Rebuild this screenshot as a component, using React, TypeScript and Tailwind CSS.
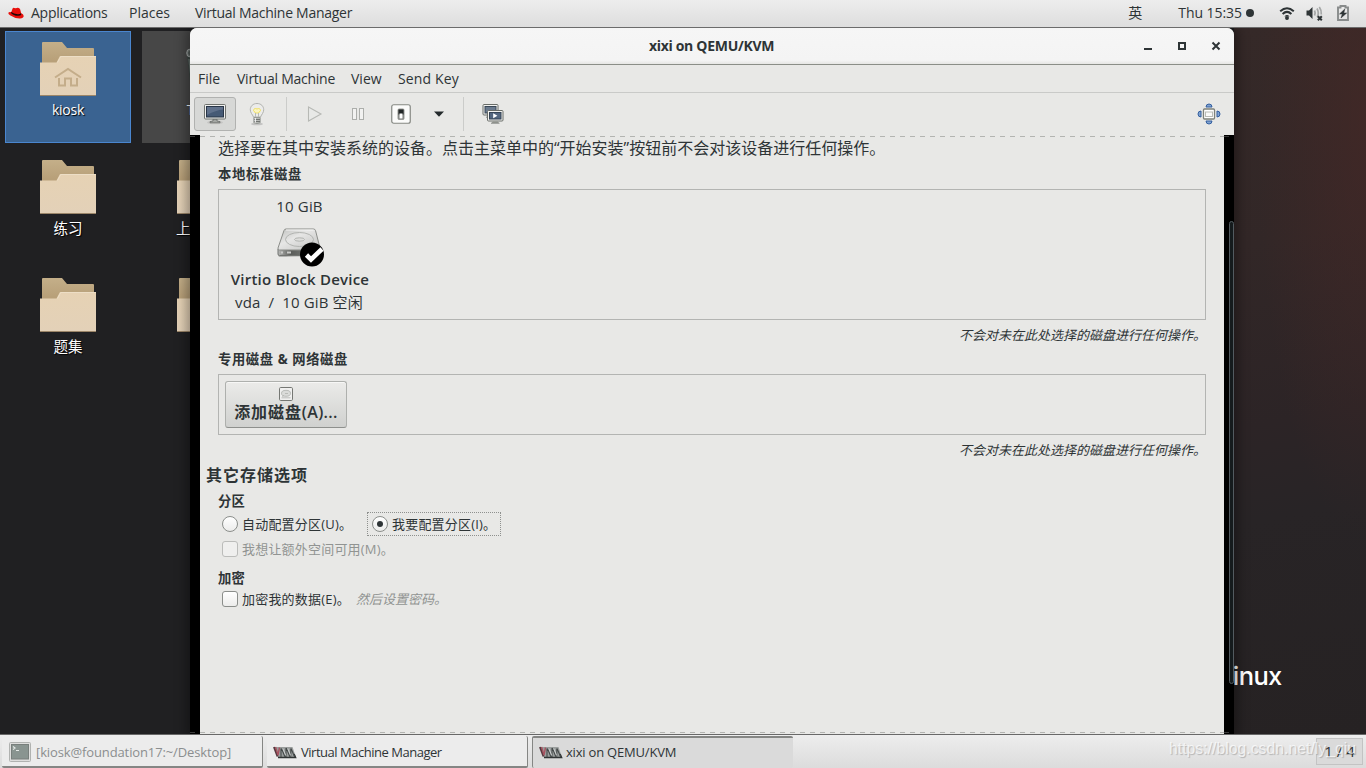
import type { ReactNode } from "react";

function Folder({ home = false }: { home?: boolean }) {
  return (
    <svg width="58" height="56" viewBox="0 0 58 56" className="block">
      <defs>
        <linearGradient id="folderBack" x1="0" y1="0" x2="0" y2="1">
          <stop offset="0" stopColor="#c4af89" />
          <stop offset="0.5" stopColor="#b8a079" />
        </linearGradient>
        <linearGradient id="folderFront" x1="0" y1="0" x2="0" y2="1">
          <stop offset="0" stopColor="#e6d2b4" />
          <stop offset="1" stopColor="#e3d1b8" />
        </linearGradient>
      </defs>
      <path d="M3 1q0-1 1-1h19l5 6h26q1 0 1 1v30H3z" fill="url(#folderBack)" />
      <path d="M1 20.500h16.500l3.500-6.500H57v39H1z" fill="url(#folderFront)" />
      <path d="M1 53.500h56" stroke="#9b8568" strokeWidth="1" />
      <path d="M18.500 20.500l3.300-6H57" stroke="#eddec6" strokeWidth="1" fill="none" />
      {home && (
        <path
          d="M16 35.500L29 27l13 8.500M20 36v7.500h6v-7h6v7h6V36"
          stroke="#c4ad8a"
          strokeWidth="2"
          fill="none"
        />
      )}
    </svg>
  );
}

function DesktopItem({ label, home = false, selected = false }: { label: string; home?: boolean; selected?: boolean }) {
  return (
    <div
      className={
        selected
          ? "flex h-28 w-[126px] flex-col items-center border border-[#4a86cf] bg-[#3a6391] pt-2.5"
          : "flex h-28 w-[126px] flex-col items-center border border-transparent pt-2.5"
      }
    >
      <Folder home={home} />
      <span
        className={
          home
            ? "mt-0.5 text-sm leading-5 tracking-[-0.250px] whitespace-nowrap text-white [text-shadow:1px_1px_1px_#000]"
            : "mt-[3px] text-[14.500px] leading-5 whitespace-nowrap text-white [text-shadow:1px_1px_1px_#000]"
        }
      >
        {label}
      </span>
    </div>
  );
}

function Trash() {
  return (
    <svg width="40" height="56" viewBox="0 0 40 56">
      <path d="M2 10l4 36q14 7 28 0l4-36z" fill="#3b4643" />
      <path d="M4 15l3 26" stroke="#65706c" strokeWidth="1.500" />
      <path d="M2.500 6q-1.500 3 0 6l3 1V5z" fill="#6f7775" stroke="#a5a9a8" />
      <ellipse cx="20" cy="9" rx="17" ry="5" fill="#525a58" />
    </svg>
  );
}

function RedHat() {
  return (
    <svg width="16" height="13" viewBox="0 0 16 13">
      <path d="M3.200 5.200L4.600 1.600Q5 .6 6.200.9l1.600.4L9.600.8Q11.500.6 12.200 2.400l1 3.900q2.300.9 2.500 2.600-.2 2.300-3.700 2.500Q6.500 11.500 2.400 8.600.2 7 .3 5.900q.4-1.100 2.900-.7z" fill="#e8100c" />
      <path d="M3.200 5l-.2.900q2.600 2.900 7.300 2.800 2.600-.1 3-1.300L13 6.100q-.7 1.300-3.200 1.200Q5.700 7.100 3.200 5z" fill="#1c0808" />
    </svg>
  );
}

function Monitor() {
  return (
    <svg width="24" height="22" viewBox="0 0 24 22">
      <ellipse cx="12" cy="19.500" rx="8" ry="1.800" fill="#c5c5c3" />
      <path d="M10 16h4v2l3 .6v1.200H7v-1.200l3-.6z" fill="#a3a6a2" stroke="#686b68" strokeWidth=".8" />
      <rect x="1.500" y="1.500" width="21" height="14.500" rx="1" fill="#f0f0ee" stroke="#6f726e" />
      <rect x="3.500" y="3.500" width="17" height="10.500" fill="#465a75" stroke="#293647" />
      <path d="M4 4h16v2.500Q13 7 4 12z" fill="#71819a" opacity=".6" />
    </svg>
  );
}

function Bulb() {
  return (
    <svg width="20" height="24" viewBox="0 0 20 24">
      <ellipse cx="10" cy="22" rx="6" ry="1.300" fill="#aaa" opacity=".6" />
      <path d="M10 1.500c-4 0-6.700 2.700-6.700 6.200 0 3 2 4.500 3.200 7.300h7c1.200-2.800 3.200-4.300 3.200-7.300 0-3.500-2.700-6.200-6.700-6.200z" fill="#ececea" stroke="#b0b2af" />
      <path d="M6 8q4-3 8 0l-1.500 3q-2.500-1.500-5 0z" fill="#fbf5c0" />
      <path d="M6.500 8.500Q7 5.500 10 7q3-1.500 3.500 1.500L11.500 11h-3z" fill="none" stroke="#f0df63" />
      <path d="M8.500 11v4m3-4v4" stroke="#b8bab7" />
      <path d="M6.800 15.500h6.400v5.200q-3.200 1.800-6.400 0z" fill="#b9bbb8" stroke="#8d908c" strokeWidth=".8" />
      <path d="M7 17.500h6M7 19.500h6" stroke="#727572" />
      <path d="M8.300 16v4.500" stroke="#fff" />
    </svg>
  );
}

function DiskMini() {
  return (
    <svg width="14" height="14" viewBox="0 0 14 14" className="block">
      <rect x=".5" y=".5" width="13" height="13" rx="1.200" fill="#f0f0ef" stroke="#757773" />
      <ellipse cx="7" cy="6.300" rx="4.500" ry="3" fill="#dadbd9" stroke="#adb0ac" strokeWidth=".8" />
      <path d="M3 9.500l2-1M6 6.500h3M2.500 10.800h9" stroke="#b0b2af" strokeWidth=".8" />
    </svg>
  );
}

function Disk() {
  return (
    <svg width="50" height="42" viewBox="0 0 50 42" className="block">
      <defs>
        <linearGradient id="diskTop" x1="0" y1="0" x2="1" y2="1">
          <stop offset="0" stopColor="#bfc0be" />
          <stop offset=".4" stopColor="#e6e6e5" />
          <stop offset="1" stopColor="#c0c1bf" />
        </linearGradient>
        <linearGradient id="diskSide" x1="0" y1="0" x2="1" y2="0">
          <stop offset="0" stopColor="#b9bab8" />
          <stop offset=".3" stopColor="#5a5c59" />
          <stop offset="1" stopColor="#8a8c88" />
        </linearGradient>
      </defs>
      <path d="M2 30q20 3 42 0v2H3z" fill="#b2b3b1" />
      <path d="M2 24v5q0 1.500 1.500 1.500h39q1.500 0 1.500-1.500v-5z" fill="url(#diskSide)" stroke="#717370" />
      <path d="M10 4h27.500q1.500 0 2 1.500L44 23q.3 2-1.500 2h-39Q1.600 25 2 23L8 5.500Q8.500 4 10 4z" fill="url(#diskTop)" stroke="#8b8d89" />
      <path d="M10 5h27.500" stroke="#f6f6f5" />
      <ellipse cx="23.500" cy="14.500" rx="14" ry="7" fill="none" stroke="#adafab" strokeWidth=".9" />
      <ellipse cx="23.500" cy="14.500" rx="5" ry="1.700" fill="#dededc" stroke="#adafab" strokeWidth=".9" />
      <path d="M5 27.500h2m4 0h4" stroke="#c9cac8" strokeWidth="2" />
      <circle cx="36" cy="29.500" r="12" fill="#000" />
      <path d="M30.500 30l4.500 4.500 11-10.500" fill="none" stroke="#fff" strokeWidth="4.600" />
    </svg>
  );
}

function VmmLogo() {
  return (
    <svg width="24" height="13" viewBox="0 0 24 13" className="shrink-0">
      <path d="M1 1h18.500l3.500 10.500H5z" fill="#9a9e9d" />
      <path d="M5 11.500h17.500L21 8" fill="none" stroke="#303434" strokeWidth="1.600" />
      <path d="M1 1l3.500 9.500" fill="none" stroke="#55383e" strokeWidth="2" />
      <path d="M2.500 1L5 9l1.500-7.500" fill="none" stroke="#a85361" strokeWidth="1.400" />
      <path d="M8 2.500v8.500M8.500 2.500l3.500 8.500M13 2v9M13.300 2l3.700 9M17.800 2.500v8M18 2.500l3.500 8" fill="none" stroke="#454a4a" strokeWidth="1.100" />
      <path d="M9.800 2.500l3 7M14.700 2.500l3 7" stroke="#d3d6d6" strokeWidth=".9" />
    </svg>
  );
}

function FitIcon() {
  return (
    <svg width="24" height="22" viewBox="0 0 24 22">
      <g fill="#80a3d1" stroke="#345f9f" strokeWidth="1">
        <path d="M9 4q0-3 3-3t3 3zM9 18q0 3 3 3t3-3zM4 8q-3 0-3 3t3 3zM20 8q3 0 3 3t-3 3z" />
      </g>
      <rect x="6.500" y="6" width="11" height="10" rx="1" fill="#fff" stroke="#7e817a" strokeWidth="1.300" />
      <rect x="8.500" y="9" width="7" height="4.500" fill="#fafaf9" stroke="#b9bbb6" />
    </svg>
  );
}

function Caption({ children }: { children: ReactNode }) {
  return <div className="text-right text-[13px] leading-5 italic">{children}</div>;
}

function Separator() {
  return <div className="h-[34px] w-px bg-[#cbccca]" />;
}

function TopBar() {
  return (
    <header className="flex h-7 shrink-0 items-center border-b border-[#6c6c6c] bg-linear-to-b from-[#ededed] to-[#dedede] pb-px pl-2 text-sm whitespace-nowrap">
      <RedHat />
      <span className="ml-[7px] w-[98px] tracking-[-0.270px]">Applications</span>
      <span className="w-[66px]">Places</span>
      <span className="tracking-[-0.270px]">Virtual Machine Manager</span>
      <span className="ml-auto text-[14px]">英</span>
      <span className="ml-9 tracking-[-0.050px]">Thu 15:35</span>
      <span className="ml-1 size-2 rounded-full bg-[#2e3436]" />
      <svg width="16" height="16" viewBox="0 0 16 16" className="ml-[25px]" fill="none" stroke="#2e3436" strokeWidth="2">
        <path d="M1.200 6.200Q8 .2 14.800 6.200" />
        <path d="M3.600 9Q8 4.800 12.400 9" />
        <path d="M5.800 11.300Q8 9.400 10.200 11.300" strokeWidth="1" />
        <circle cx="8" cy="13" r="1.200" fill="#2e3436" strokeWidth="1.500" />
      </svg>
      <svg width="17" height="16" viewBox="0 0 17 16" className="ml-[11px]">
        <path d="M.5 5.500h2.500L6.500 2v12L3 10.500H.5z" fill="#2e3436" />
        <path d="M8.500 5.500q1.300 2.500 0 5M11 3.500q2.500 4.500.2 8.500M13.300 2q2.500 3.500 2 7.500" fill="none" stroke="#a5a7a7" strokeWidth="1.700" />
        <path d="M11.800 11.300l4 4m0-4l-4 4" stroke="#2e3436" strokeWidth="2" />
      </svg>
      <svg width="12" height="16" viewBox="0 0 12 16" className="mr-[17px] ml-3.5">
        <path d="M1 2.500h2.500V1h5v1.500H11V15H1z" fill="none" stroke="#888b8b" strokeWidth="1.900" />
        <path d="M7.800 4L2.500 9H5.300L4 13l5.700-5H6.800z" fill="#2e3436" stroke="#2e3436" strokeWidth=".5" />
      </svg>
    </header>
  );
}

function Toolbar() {
  return (
    <div className="flex h-[42px] shrink-0 items-center pl-1">
      <div className="flex h-[34px] w-[42px] items-center justify-center rounded-[3px] border border-[#b1b2b0] bg-[#d7d8d6]">
        <Monitor />
      </div>
      <div className="ml-[11px] flex"><Bulb /></div>
      <div className="ml-[19px]"><Separator /></div>
      <svg width="16" height="18" viewBox="0 0 16 18" className="ml-5">
        <path d="M1.500 2L14 9 1.500 16z" fill="#e8e9e7" stroke="#b7b9b5" strokeWidth="1.100" />
      </svg>
      <svg width="14" height="14" viewBox="0 0 14 14" className="ml-7" fill="#f2f2f1" stroke="#acaeab">
        <rect x="1.500" y="1.500" width="4" height="11" />
        <rect x="8.500" y="1.500" width="4" height="11" />
      </svg>
      <svg width="20" height="20" viewBox="0 0 20 20" className="ml-[26px]">
        <rect x=".75" y=".75" width="18.500" height="18.500" rx="2" fill="#fbfbfa" stroke="#858883" strokeWidth="1.200" />
        <rect x="7" y="5" width="6" height="10.500" rx="1" fill="#777976" stroke="#999b97" />
        <rect x="7.500" y="5.500" width="5" height="5" fill="#222626" />
        <rect x="8.500" y="9.500" width="3" height="5" fill="#fff" />
      </svg>
      <svg width="10" height="6" viewBox="0 0 10 6" className="ml-[23px]"><path d="M0 .5h10L5 5.700z" fill="#242a2c" /></svg>
      <div className="ml-[19px]"><Separator /></div>
      <svg width="22" height="22" viewBox="0 0 22 22" className="ml-[18px]">
        <path d="M4 13.500h6v1.500H4z" fill="#a6a9a5" />
        <rect x="1" y="1.500" width="15" height="10.500" rx="1" fill="#f2f2f0" stroke="#686c68" />
        <rect x="3" y="3.500" width="11" height="6.500" fill="#6a7a8e" stroke="#394756" />
        <rect x="5.500" y="7.500" width="15.500" height="10.500" rx="1" fill="#f2f2f0" stroke="#686c68" />
        <rect x="7.500" y="9.500" width="11.500" height="6.500" fill="#53667f" stroke="#354354" />
        <path d="M11.200 10.300v4.900l4.200-2.450z" fill="#fff" />
        <path d="M11 18.500h4.500l2 1.500v.8H9v-.8z" fill="#8e918c" />
      </svg>
      <div className="mr-[13px] ml-auto flex"><FitIcon /></div>
    </div>
  );
}

const dashes = "h-px bg-[repeating-linear-gradient(90deg,#b3b4b1_0_5px,transparent_5px_10px)]";
const darkDashes = "h-px w-2.5 bg-[repeating-linear-gradient(90deg,#3a3a3a_0_5px,transparent_5px_10px)]";

function Installer() {
  return (
    <main className="flex w-[1024px] flex-col bg-[#e8e8e6] pt-px pl-1.5 text-[13px] text-[#2e3436]">
      <div className="mr-[18px] ml-3 flex flex-col">
        <p className="text-base leading-5">选择要在其中安装系统的设备。点击主菜单中的<span className="font-['Open_Sans']">“</span>开始安装<span className="font-['Open_Sans']">”</span>按钮前不会对该设备进行任何操作。</p>
        <h3 className="mt-1.5 text-[13.300px] leading-5 font-bold tracking-[0.700px]">本地标准磁盘</h3>
        <section className="mt-[5px] h-[131px] border border-[#b3b4b2]">
          <div className="flex w-[162px] flex-col items-center pt-1.5 text-[15px] whitespace-nowrap">
            <span className="mr-px leading-5 tracking-[0.150px]">10 GiB</span>
            <div className="mt-[9px] mb-px ml-px h-[44px]"><Disk /></div>
            <span className="-mt-px text-[15px] leading-5 font-semibold tracking-[0.220px]">Virtio Block Device</span>
            <span className="mt-[3px] mr-[2px] leading-5 tracking-[0.150px]"><span>vda</span><span className="mx-2">/</span><span>10 GiB 空闲</span></span>
          </div>
        </section>
        <div className="mt-[5px]"><Caption>不会对未在此处选择的磁盘进行任何操作。</Caption></div>
        <h3 className="mt-1 text-[13.300px] leading-5 font-bold tracking-[0.600px]">专用磁盘 &amp; 网络磁盘</h3>
        <section className="mt-[5px] flex h-[61px] border border-[#b3b4b2] pt-1.5 pl-1.5">
          <button className="flex h-[47px] w-[122px] flex-col items-center rounded-[3px] border border-[#aeb0ad] border-b-[#8e908d] bg-linear-to-b from-[#ebebe9] to-[#d0d1cf] pt-[5px] shadow-[inset_0_1px_#f7f7f6]">
            <DiskMini />
            <span className="mt-[3px] text-base leading-4 font-bold tracking-[0.900px] whitespace-nowrap"><span>添加磁盘</span><span className="font-semibold tracking-[0.350px]">(A)...</span></span>
          </button>
        </section>
        <div className="mt-[5px]"><Caption>不会对未在此处选择的磁盘进行任何操作。</Caption></div>
      </div>
      <h2 className="mt-[3px] text-base leading-6 font-bold tracking-[1px]">其它存储选项</h2>
      <div className="ml-3">
        <h3 className="mt-1 text-[13.300px] leading-5 font-bold tracking-[0.300px]">分区</h3>
        <div className="mt-px flex h-6 items-center leading-6 tracking-[0.200px]">
          <span className="ml-1 size-4 rounded-full border border-[#8b8e8b] bg-linear-to-b from-white to-[#ececeb]" />
          <span className="ml-1 w-[125px]">自动配置分区(U)。</span>
          <span className="flex h-6 w-[134px] items-center border border-dotted border-[#8e908e] pl-1">
            <span className="flex size-4 items-center justify-center rounded-full border border-[#8b8e8b] bg-linear-to-b from-white to-[#ececeb]"><span className="size-1.5 rounded-full bg-[#2e3436]" /></span>
            <span className="ml-1 whitespace-nowrap">我要配置分区(I)。</span>
          </span>
        </div>
        <div className="mt-[3px] flex items-center leading-5 tracking-[0.200px] text-[#919492]">
          <span className="ml-1 size-4 rounded-[3px] border border-[#bbbcba] bg-[#efefee]" />
          <span className="ml-1">我想让额外空间可用(M)。</span>
        </div>
        <h3 className="mt-[9px] text-[13.300px] leading-5 font-bold tracking-[0.300px]">加密</h3>
        <div className="mt-px flex items-center leading-5">
          <span className="ml-1 size-4 rounded-[3px] border border-[#8b8e8b] bg-linear-to-b from-white to-[#ececeb]" />
          <span className="ml-1 tracking-[0.200px]">加密我的数据(E)。</span>
          <span className="ml-1.5 text-[#919492] italic">然后设置密码。</span>
        </div>
      </div>
    </main>
  );
}

function VmWindow() {
  return (
    <div className="absolute top-0 left-[190px] flex h-[706px] w-[1044px] flex-col rounded-t-[7px] bg-[#e8e8e6] shadow-[0_0_12px_4px_rgba(0,0,0,0.35)]">
      <div className="flex h-[37px] shrink-0 items-center rounded-t-[7px] border-b border-[#8b8e88] bg-linear-to-b from-[#f6f6f6] via-[#f4f4f4] via-90% to-[#e6e6e4] text-sm">
        <span className="flex-1 pl-[113px] text-center font-bold tracking-[-0.300px] text-[#2e3436]">xixi on QEMU/KVM</span>
        <svg width="114" height="12" viewBox="0 0 114 12" fill="none" stroke="#2e3436" strokeWidth="2">
          <path d="M24 9h8" />
          <rect x="59" y="3" width="6" height="6" />
          <path d="M92.500 2.500l7 7m0-7l-7 7" />
        </svg>
      </div>
      <nav className="flex h-7 shrink-0 items-center border-b border-[#c9cac8] pl-2 text-sm">
        <span className="w-[39px]">File</span>
        <span className="w-[114px] tracking-[-0.250px]">Virtual Machine</span>
        <span className="w-[47px]">View</span>
        <span className="tracking-[0.150px]">Send Key</span>
      </nav>
      <Toolbar />
      <div className="flex flex-1 flex-col bg-black">
        <div className="flex">
          <div className="w-2.5 pt-px"><div className={darkDashes} /></div>
          <div className="flex-1 bg-[#e8e8e6] pt-px"><div className={dashes} /></div>
          <div className="w-2.5 pt-px"><div className={darkDashes} /></div>
        </div>
        <div className="flex flex-1 pl-2.5">
          <Installer />
          <div className="mt-[84px] ml-[5px] h-[463px] w-[5px] rounded-sm border border-[#535b60] bg-[#151b1d]" />
        </div>
        <div className="flex h-0.5">
          <div className={darkDashes} />
          <div className="flex-1 bg-[#e8e8e6]"><div className={dashes} /></div>
          <div className={darkDashes} />
        </div>
      </div>
    </div>
  );
}

function Desktop() {
  return (
    <div className="relative flex-1 overflow-hidden bg-[#202022]">
      <div className="absolute right-0 h-full w-[132px] bg-[linear-gradient(170deg,#352928_0%,#322727_30%,#2c2426_55%,#282426_68%,#262223_100%)]" />
      <div className="absolute right-0 h-full w-[132px] bg-[radial-gradient(ellipse_110px_420px_at_132px_90px,rgba(72,40,38,0.6),transparent)]" />
      <div className="relative flex pt-[3px] pl-[5px]">
        <div className="flex w-[137px] flex-col gap-1.5">
          <DesktopItem label="kiosk" home selected />
          <DesktopItem label="练习" />
          <DesktopItem label="题集" />
        </div>
        <div className="flex w-[126px] flex-col gap-1.5">
          <div className="flex h-28 flex-col items-center bg-[#474747] pt-[13px] text-sm text-white"><Trash /><span className="leading-5">Trash</span></div>
          <DesktopItem label="上课文件" />
          <DesktopItem label="vmx" />
        </div>
      </div>
      <div className="absolute top-[630px] left-[1219px] font-['Inter'] text-[25.500px] leading-9 font-medium tracking-[-0.600px] text-white">Linux</div>
      <VmWindow />
    </div>
  );
}

function Task({ children, icon, active = false, muted = false }: { children: ReactNode; icon: ReactNode; active?: boolean; muted?: boolean }) {
  const state = active
    ? "border-t-2 border-l border-[#858684] bg-[#dadada] pb-0.5"
    : "border-r border-b-2 border-[#858684] bg-[#ececec] pt-0.5";
  return (
    <div className={`flex h-8 w-[261px] items-center rounded-xs pl-[7px] text-[13px] whitespace-nowrap ${state} ${muted ? "text-[#8b8e8f]" : ""}`}>
      {icon}
      {children}
    </div>
  );
}

function Taskbar() {
  return (
    <footer className="relative flex h-[34px] shrink-0 gap-1 border-t border-[#686868] bg-linear-to-b from-[#ededed] to-[#dcdcdc] pt-px pl-0.5">
      <Task muted icon={
        <svg width="22" height="20" viewBox="0 0 22 20" className="mr-[5px]">
          <rect x=".5" y=".5" width="21" height="19" rx="1" fill="#dededd" stroke="#b0b2b0" />
          <rect x="2.500" y="2.500" width="17" height="14.500" fill="#899490" stroke="#787f7c" />
          <path d="M4 4.500l2 1.500-2 1.500M7 8.500h3" fill="none" stroke="#e5e9e7" strokeWidth="1.200" />
        </svg>
      }><span className="tracking-[-0.120px]">[kiosk@foundation17:~/Desktop]</span></Task>
      <Task icon={<span className="-ml-px mr-1 flex"><VmmLogo /></span>}><span className="tracking-[-0.480px]">Virtual Machine Manager</span></Task>
      <Task active icon={<span className="-ml-px mr-[3px] flex"><VmmLogo /></span>}><span className="tracking-[-0.200px]">xixi on QEMU/KVM</span></Task>
      <div className="mt-0.5 mr-[3px] ml-auto flex h-[27px] w-[47px] items-center justify-center border border-[#c3c3c3] bg-[#dadada] pb-0.5 text-[15px]">1 / 4</div>
      <span className="absolute top-1.5 left-[1169px] font-['Liberation_Sans'] text-[15.800px] leading-4 text-white/70 [text-shadow:1px_1px_1px_#00000035]">https://blog.csdn.net/ly_qiu</span>
    </footer>
  );
}

export default function App() {
  return (
    <div className="flex h-[768px] w-[1366px] flex-col overflow-hidden font-['Open_Sans','Noto_Sans_CJK_SC',sans-serif] leading-5 text-[#2e3436]">
      <TopBar />
      <Desktop />
      <Taskbar />
    </div>
  );
}
